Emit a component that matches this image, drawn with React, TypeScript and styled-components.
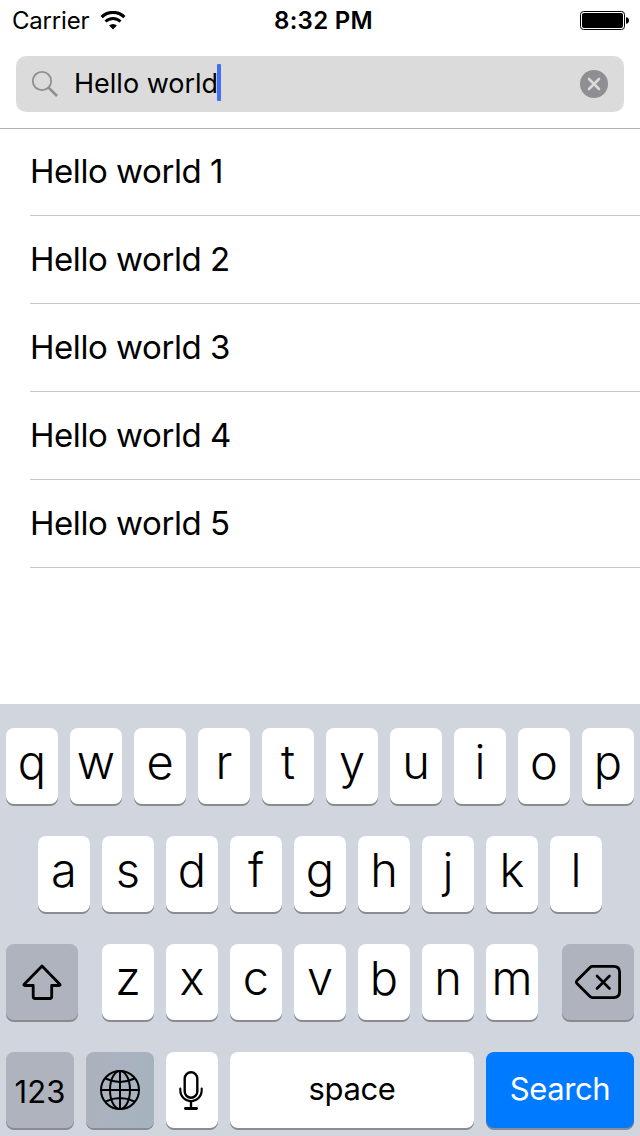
import React from "react";
import styled, { createGlobalStyle } from "styled-components";

const GlobalStyle = createGlobalStyle`
  * { box-sizing: border-box; }
  body {
    margin: 0;
    background: #fff;
    color: #000;
    font-family: Inter, "Liberation Sans", sans-serif;
  }
  svg { display: block; flex: none; }
`;

const Screen = styled.div`
  width: 640px;
  height: 1136px;
  display: flex;
  flex-direction: column;
  overflow: hidden;
`;

const StatusBar = styled.div`
  height: 40px;
  padding: 1px 11px 0 12px;
  display: grid;
  grid-template-columns: 1fr auto 1fr;
  align-items: center;
  line-height: 39px;
`;

const Carrier = styled.div`
  display: flex;
  align-items: center;
  font-size: 24px;
  font-weight: 380;
  letter-spacing: -0.2px;
`;

const CarrierName = styled.span`
  width: 88px;
`;

const Clock = styled.div`
  padding-left: 6px;
  font-size: 24px;
  font-weight: 600;
  letter-spacing: 0.3px;
`;

const BatterySlot = styled.div`
  display: flex;
  justify-content: flex-end;
`;

const Header = styled.div`
  height: 89px;
  padding: 16px 16px;
  border-bottom: 1px solid #b2b2b2;
`;

const SearchField = styled.div`
  height: 56px;
  padding: 0 16px 0 15px;
  display: flex;
  align-items: center;
  border-radius: 10px;
  background: #dbdbdb;
`;

const Query = styled.div`
  margin-left: 15px;
  padding-bottom: 1px;
  width: 143px;
  font-size: 27px;
  font-weight: 380;
  line-height: 54px;
  white-space: nowrap;
`;

const Caret = styled.div`
  width: 4px;
  height: 37px;
  margin: 0 auto 3px 0;
  border-radius: 1px;
  background: #456df0;
`;

const List = styled.div`
  flex: 1;
  padding-left: 30px;
`;

const Row = styled.div`
  height: 88px;
  padding-bottom: 2px;
  display: flex;
  align-items: center;
  border-bottom: 1px solid #c8c7cc;
  font-size: 33px;
  font-weight: 380;
  letter-spacing: -0.45px;
  &:first-child { height: 87px; }
`;

const Keyboard = styled.div`
  height: 432px;
  padding: 24px 6px 0;
  display: flex;
  flex-direction: column;
  gap: 32px;
  background: #d1d5dd;
`;

const KeyRow = styled.div<{ $spread?: boolean }>`
  height: 76px;
  display: flex;
  gap: 12px;
  justify-content: ${(p) => (p.$spread ? "space-between" : "center")};
`;

const KeyGroup = styled.div`
  display: flex;
  gap: 12px;
`;

const Key = styled.div<{ $width?: number; $tone?: string }>`
  width: ${(p) => p.$width ?? 52}px;
  height: 76px;
  display: flex;
  align-items: center;
  justify-content: center;
  border-radius: 8px;
  background: ${(p) => p.$tone ?? "#fff"};
  box-shadow: 0 2px 0 #898b8f;
`;

const Letter = styled.span`
  padding-bottom: 8px;
  font-size: 47px;
  font-weight: 350;
  line-height: 60px;
`;

const Word = styled.span<{ $light?: boolean; $drop?: number; $spacing?: number }>`
  margin-top: ${(p) => p.$drop ?? 0}px;
  font-size: 31px;
  font-weight: 370;
  letter-spacing: ${(p) => p.$spacing ?? -0.4}px;
  line-height: 40px;
  color: ${(p) => (p.$light ? "#fff" : "#000")};
`;

const GREY = "#aeb3be";

const Letters = ({ chars }: { chars: string }) => (
  <>
    {chars.split("").map((c) => (
      <Key key={c}>
        <Letter>{c}</Letter>
      </Key>
    ))}
  </>
);

const WifiIcon = () => (
  <svg width="26" height="20" viewBox="0 0 26 20">
    <path d="M1.6 6.2a16.1 16.1 0 0 1 22.8 0" fill="none" stroke="#000" strokeWidth="3.2" />
    <path d="M5.5 10.6a10.6 10.6 0 0 1 15 0" fill="none" stroke="#000" strokeWidth="2.8" />
    <path d="M13 18.5L9.1 14.6a5.6 5.6 0 0 1 7.8 0z" />
  </svg>
);

const BatteryIcon = () => (
  <svg width="49" height="19" viewBox="0 0 49 19">
    <rect x="0.5" y="0.5" width="44" height="18" rx="3" fill="none" stroke="#000" />
    <rect x="2" y="2" width="41" height="15" rx="2" />
    <path d="M46 6.2c2 0 3 1.5 3 3.3s-1 3.3-3 3.3z" />
  </svg>
);

const SearchIcon = () => (
  <svg width="28" height="28" viewBox="0 0 28 28" fill="none" stroke="#8e8e93">
    <circle cx="11" cy="11" r="9.2" strokeWidth="1.8" />
    <path d="M17.6 17.6L26 26" strokeWidth="2.6" />
  </svg>
);

const ClearIcon = () => (
  <svg width="28" height="28" viewBox="0 0 28 28">
    <circle cx="14" cy="14" r="14" fill="#8e8e93" />
    <path d="M9 9l10 10M19 9L9 19" stroke="#dbdbdb" strokeWidth="2.6" strokeLinecap="round" />
  </svg>
);

const ShiftIcon = () => (
  <svg width="40" height="36" viewBox="0 0 40 36" fill="none" stroke="#000" strokeWidth="2.8" strokeLinejoin="round">
    <path d="M20 2L2 20.5q-.4 1 .8 1H11.2V32.5q0 2 2 2H27.7q2 0 2-2V21.5H37.2q1.2 0 .8-1z" />
  </svg>
);

const DeleteIcon = () => (
  <svg width="46" height="34" viewBox="0 0 46 34" fill="none" stroke="#000" strokeWidth="2.8" strokeLinecap="round" strokeLinejoin="round">
    <path d="M17.5 1.4H38.6Q44.6 1.4 44.6 7.4V26.6Q44.6 32.6 38.6 32.6H17.5Q16 32.6 15 31.6L2 18.5Q.8 17 2 15.5L15 2.4Q16 1.4 17.5 1.4z" />
    <path d="M22 11l12.5 12.5M34.5 11L22 23.5" strokeWidth="2.6" />
  </svg>
);

const GlobeIcon = () => (
  <svg width="40" height="40" viewBox="0 0 40 40" fill="none" stroke="#000" strokeWidth="2">
    <circle cx="20" cy="20" r="19" />
    <ellipse cx="20" cy="20" rx="10" ry="19" />
    <path d="M20 1v38M1 20h38M5.5 8.5Q20 15.5 34.5 8.5M5.5 31.5Q20 24.5 34.5 31.5" />
  </svg>
);

const MicIcon = () => (
  <svg width="26" height="40" viewBox="0 0 26 40" fill="none" stroke="#000" strokeWidth="2.4" strokeLinecap="round">
    <rect x="5.7" y="2.2" width="12.6" height="25.6" rx="6.3" />
    <path d="M1.3 18.5v2a10.7 10.7 0 0 0 21.4 0v-2" strokeWidth="2.1" />
    <path d="M12 31.5V38" />
    <path d="M6.4 38.5h11.2" strokeWidth="2.8" />
  </svg>
);

export default function App() {
  return (
    <Screen>
      <GlobalStyle />
      <StatusBar>
        <Carrier>
          <CarrierName>Carrier</CarrierName>
          <WifiIcon />
        </Carrier>
        <Clock>8:32 PM</Clock>
        <BatterySlot>
          <BatteryIcon />
        </BatterySlot>
      </StatusBar>
      <Header>
        <SearchField>
          <SearchIcon />
          <Query>Hello world</Query>
          <Caret />
          <ClearIcon />
        </SearchField>
      </Header>
      <List>
        {[1, 2, 3, 4, 5].map((n) => (
          <Row key={n}>Hello world {n}</Row>
        ))}
      </List>
      <Keyboard>
        <KeyRow>
          <Letters chars="qwertyuiop" />
        </KeyRow>
        <KeyRow>
          <Letters chars="asdfghjkl" />
        </KeyRow>
        <KeyRow $spread>
          <Key $width={72} $tone={GREY}>
            <ShiftIcon />
          </Key>
          <KeyGroup>
            <Letters chars="zxcvbnm" />
          </KeyGroup>
          <Key $width={72} $tone={GREY}>
            <DeleteIcon />
          </Key>
        </KeyRow>
        <KeyRow>
          <Key $width={68} $tone={GREY}>
            <Word $drop={3} $spacing={0.1}>
              123
            </Word>
          </Key>
          <Key $width={68} $tone="linear-gradient(100deg, #abb2be 20%, #a5b3bf 90%)">
            <GlobeIcon />
          </Key>
          <Key>
            <MicIcon />
          </Key>
          <Key $width={244}>
            <Word $drop={-2}>space</Word>
          </Key>
          <Key $width={148} $tone="#007aff">
            <Word $drop={-2} $light>
              Search
            </Word>
          </Key>
        </KeyRow>
      </Keyboard>
    </Screen>
  );
}
